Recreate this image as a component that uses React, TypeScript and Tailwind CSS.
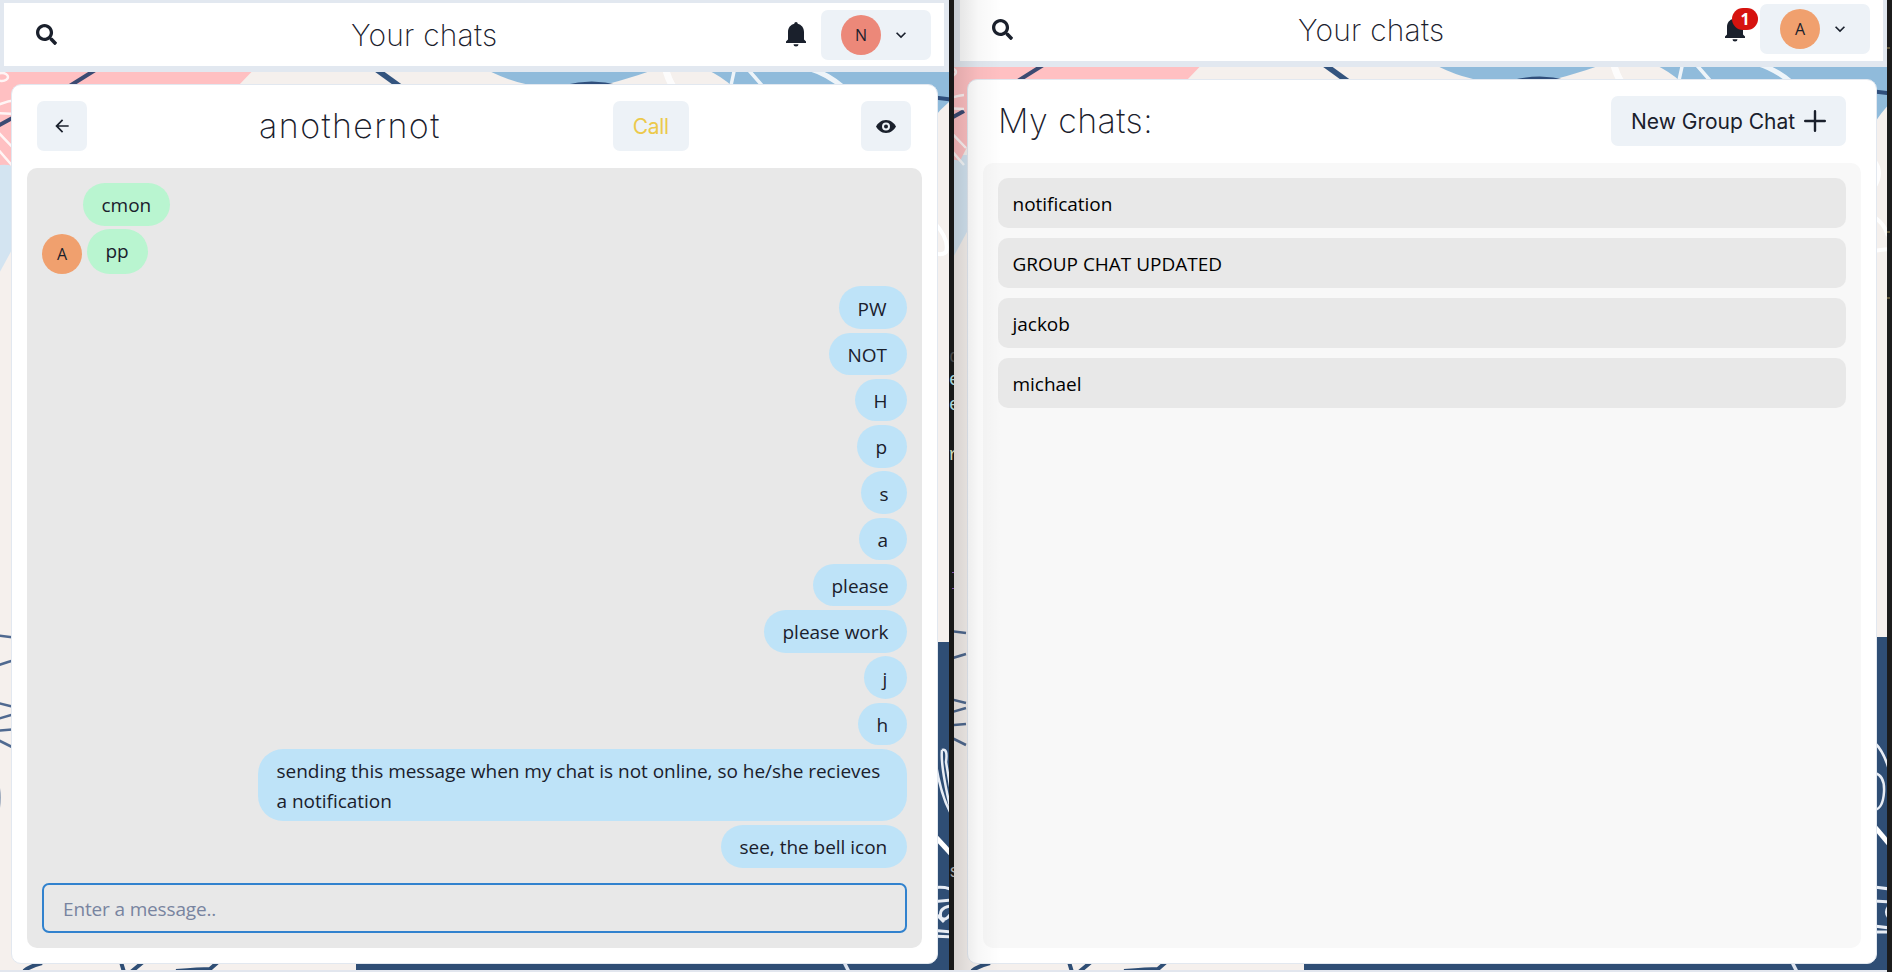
import type { ReactNode } from "react";
import { FaSearch } from "react-icons/fa";

function BellIcon() {
  return (
    <svg className="h-[25px] w-5 shrink-0" viewBox="0 0 20 25" fill="#1a202c">
      <path d="M10 0a1.7 1.7 0 0 1 1.7 1.8C15.4 2.7 18 5.8 18 10v7.6l2 1.9V21H0v-1.5l2-1.9V10c0-4.2 2.6-7.3 6.300-8.200A1.7 1.7 0 0 1 10 0z" />
      <path d="M7.500 22.200h5a2.500 2.300 0 0 1-5 0z" />
    </svg>
  );
}

function ChevronIcon() {
  return (
    <svg className="size-5 shrink-0" viewBox="0 0 24 24" fill="#1a202c">
      <path d="M16.590 8.590L12 13.170 7.410 8.590 6 10l6 6 6-6z" />
    </svg>
  );
}

function BackIcon() {
  return (
    <svg className="size-5" viewBox="0 0 24 24" fill="#1a202c">
      <path d="M20 11H7.830l5.590-5.590L12 4l-8 8 8 8 1.410-1.410L7.830 13H20v-2z" />
    </svg>
  );
}

function EyeIcon() {
  return (
    <svg className="h-[13px] w-5" viewBox="0 0 20 13">
      <path d="M10 0C5 0 1.500 3.600 0 6.500 1.500 9.400 5 13 10 13s8.500-3.600 10-6.500C18.500 3.600 15 0 10 0z" fill="#1a202c" />
      <circle cx="10" cy="6.500" r="3" fill="#1a202c" stroke="#edf2f7" strokeWidth="2" />
    </svg>
  );
}

function PlusIcon() {
  return (
    <svg className="size-[22px]" viewBox="0 0 22 22" stroke="#1a202c" strokeWidth="2.400" strokeLinecap="round">
      <path d="M11 1.200v19.600M1.200 11h19.600" />
    </svg>
  );
}

function Pattern({ dx, dy, edge }: { dx: number; dy: number; edge: ReactNode }) {
  return (
    <svg className="absolute inset-0 size-full" fill="none">
      <g transform={`translate(${dx} ${dy})`}>
        <path d="M-10 160H20V235L-10 290z" fill="#d3e4f1" />
        <path d="M-10 60H263L215 110H40L12 166Q4 163-10 167z" fill="#ffc0c2" />
        <path d="M470 60Q508 84 540 86H600Q640 76 680 60z" fill="#90bbdb" />
        <path d="M680 60Q718 70 738 92H920V140Q932 116 949 102L960 96V60z" fill="#90bbdb" />
        <path d="M915 642H960V980H915z" fill="#2f4e75" />
        <g stroke="#3b4a72" strokeWidth="4">
          <path d="M68 87L100 67M-6 128L16 116" />
          <path d="M373 67L402 88" stroke="#33547f" strokeWidth="5.500" />
          <path d="M565 87Q592 80 618 87M922 96L955 100" stroke="#2f4e7b" />
        </g>
        <g stroke="#fff" strokeWidth="2.500" opacity=".85">
          <ellipse cx="2" cy="77" rx="6" ry="4" />
          <path d="M-4 106Q6 101 16 100M-4 113L16 114M-4 130L18 153M-4 147L16 170" />
          <path d="M665 66Q668 80 674 88" strokeWidth="7" />
          <path d="M735 67L730 90M746 67L766 90" strokeWidth="3.500" />
          <path d="M808 68Q828 74 844 88" strokeWidth="5" />
        </g>
        <path
          d="M-6 635L18 638M-6 667Q4 663 18 659M-6 702L18 708M-6 720L18 713M-6 731L18 729M-6 738L18 750"
          stroke="#4f6990"
          strokeWidth="2.600"
        />
        <path d="M-1 788Q1 797-1 808" stroke="#9daabd" strokeWidth="2" />
      </g>
      {edge}
      <g transform={`translate(${dx} 0)`}>
        <path d="M356 955H960V970H356z" fill="#2f4e75" />
        <g stroke="#2f4e75" strokeWidth="4">
          <path d="M24 971Q30 966 42 963M121 962L124 972M131 972L143 962" />
          <path d="M176 971Q200 969 210 969L218 962" />
        </g>
        <path d="M844 962L849 972" stroke="#dde3ee" strokeWidth="3.500" />
      </g>
    </svg>
  );
}

function ChatEdge() {
  return (
    <g stroke="#e8edf5" strokeWidth="2.500">
      <path d="M934 222Q950 240 946 252Q942 256 934 253" stroke="#fff" strokeWidth="4" />
      <path d="M942 750Q940 765 952 815M942 750Q948 748 946 762L951 792M936 765Q941 795 950 812" />
      <path d="M932 833L955 858" stroke="#fff" strokeWidth="5" />
      <path d="M930 888Q944 886 950 889M930 902L952 900M950 906Q938 908 941 918Q946 922 952 912M930 908L944 922M930 930L952 932M930 936L952 937" strokeWidth="3" />
    </g>
  );
}

function ListEdge() {
  return (
    <g stroke="#e8edf5" strokeWidth="2.500">
      <path d="M920 160Q930 172 920 188M918 216Q930 222 934 236M918 251L936 249" stroke="#fff" strokeWidth="4" opacity=".85" />
      <path d="M921 743Q930 752 935 770M921 773Q931 776 930 792Q929 808 921 810" />
      <path d="M920 826L936 845" stroke="#fff" strokeWidth="5" />
      <path d="M920 887L936 889M920 901L936 902M935 906Q930 912 935 918M920 926L936 928M920 932L936 932" strokeWidth="3" />
    </g>
  );
}

function Avatar({ letter, color }: { letter: string; color: string }) {
  return (
    <div className={`flex size-10 shrink-0 items-center justify-center rounded-full font-['Open_Sans',sans-serif] text-[16px] font-medium leading-none text-[#1a202c] ${color}`}>
      {letter}
    </div>
  );
}

function Header({ letter, color, badge, className, titleClass }: { letter: string; color: string; badge?: number; className: string; titleClass: string }) {
  return (
    <header className={`relative flex shrink-0 items-center border-[#e2e8f0] bg-white ${className}`}>
      <FaSearch className="size-[21px] shrink-0 text-[#1a202c]" />
      <h1 className={`whitespace-nowrap text-[30px] font-extralight leading-[30px] tracking-[0.200px] text-[#1a202c] ${titleClass}`}>Your chats</h1>
      <div className="ml-auto flex items-center">
        <div className="relative mr-[15px]">
          <BellIcon />
          {badge !== undefined && (
            <span className="absolute -top-[9px] left-[7px] flex h-[22px] w-[26px] items-center justify-center rounded-full bg-[#d6130f] font-['Open_Sans',sans-serif] text-[16px] font-bold leading-none text-white">
              {badge}
            </span>
          )}
        </div>
        <button className="flex h-[50px] w-[110px] items-center rounded-[7px] bg-[#edf2f7] pl-5">
          <Avatar letter={letter} color={color} />
          <span className="ml-[10px]">
            <ChevronIcon />
          </span>
        </button>
      </div>
    </header>
  );
}

function Bubble({ children, className }: { children: ReactNode; className: string }) {
  return (
    <div className={`flex shrink-0 items-center rounded-[25px] pl-[18.500px] font-['Open_Sans',sans-serif] text-[19px] leading-[30px] tracking-[-0.020px] text-[#1a202c] ${className}`}>
      <span>{children}</span>
    </div>
  );
}

const sent = [
  { text: "PW", width: "w-[68px]" },
  { text: "NOT", width: "w-[78px]" },
  { text: "H", width: "w-[52px]" },
  { text: "p", width: "w-[50px]" },
  { text: "s", width: "w-[46px]" },
  { text: "a", width: "w-[48px]" },
  { text: "please", width: "w-[94px]" },
  { text: "please work", width: "w-[143px]" },
  { text: "j", width: "w-[43px]" },
  { text: "h", width: "w-[49px]" },
];

const chats = ["notification", "GROUP CHAT UPDATED", "jackob", "michael"];

function ChatWindow() {
  return (
    <section className="relative flex h-[970px] w-[949px] shrink-0 flex-col overflow-hidden bg-[#f5f0ed]">
      <Pattern dx={0} dy={0} edge={<ChatEdge />} />
      <Header letter="N" color="bg-[#ec8879]" titleClass="ml-[294px]" className="h-[72px] border-b-[6px] border-l-4 border-r-[5px] border-t-[3px] pl-8 pr-[13px]" />
      <div className="relative ml-[11px] mt-3 flex h-[880px] w-[927px] flex-col rounded-[10px] border border-[#e2e8f0] bg-white px-[15px] pb-[15px] pt-4">
        <div className="flex h-[50px] items-center justify-between pl-[10px] pr-[11px]">
          <button className="flex size-[50px] items-center justify-center rounded-[7px] bg-[#edf2f7]">
            <BackIcon />
          </button>
          <h2 className="text-[34px] font-extralight leading-10 tracking-[1.400px] text-[#1a202c]">anothernot</h2>
          <button className="flex h-[50px] w-[76px] items-center justify-center rounded-[7px] bg-[#edf2f7] pt-[2px] text-[21px] tracking-[-0.300px] text-[#ecc94b]">Call</button>
          <button className="flex size-[50px] items-center justify-center rounded-[7px] bg-[#edf2f7]">
            <EyeIcon />
          </button>
        </div>
        <div className="mt-[17px] flex flex-1 flex-col rounded-[10px] bg-[#e8e8e8] p-[15px]">
          <Bubble className="ml-[41px] h-[42.500px] w-[87px] bg-[#b9f5d0] pt-[2px]">cmon</Bubble>
          <div className="mt-[3.750px] flex items-end">
            <Avatar letter="A" color="bg-[#f0a06e]" />
            <Bubble className="ml-[5px] h-[45px] w-[61px] bg-[#b9f5d0] pb-[2px]">pp</Bubble>
          </div>
          <div className="mt-[12px] flex flex-col items-end gap-[3.750px]">
            {sent.map((m) => (
              <Bubble key={m.text} className={`h-[42.500px] bg-[#bee3f8] pt-[2px] ${m.width}`}>{m.text}</Bubble>
            ))}
            <Bubble className="h-[72.500px] w-[649px] bg-[#bee3f8] pt-px">
              sending this message when my chat is not online, so he/she recieves
              <br />a notification
            </Bubble>
            <Bubble className="h-[42.500px] w-[186px] bg-[#bee3f8] pt-[2px]">see, the bell icon</Bubble>
          </div>
          <input
            placeholder="Enter a message.."
            className="mt-auto h-[50px] w-full rounded-[7px] border-2 border-[#3182ce] bg-transparent px-[19px] pt-[2px] font-['Open_Sans',sans-serif] text-[19px] tracking-[-0.150px] outline-none placeholder:text-[#7884a0]"
          />
        </div>
      </div>
    </section>
  );
}

function ListWindow() {
  return (
    <section className="relative flex h-[970px] w-[933px] shrink-0 flex-col overflow-hidden bg-[#f5f0ed]">
      <Pattern dx={-6} dy={-5} edge={<ListEdge />} />
      <Header letter="A" color="bg-[#f0a06e]" badge={1} titleClass="ml-[285px] pt-[2px]" className="h-[67px] border-b-[6px] border-l-[6px] border-r-4 pb-[3px] pl-8 pr-[13px]" />
      <div className="relative ml-[13px] mt-3 flex h-[885px] w-[910px] flex-col rounded-[10px] border border-[#e2e8f0] bg-white px-[15px] pb-[15px] pt-4">
        <div className="flex h-[50px] items-center justify-between px-[15px]">
          <h2 className="text-[34px] font-extralight leading-10 tracking-[0.450px] text-[#1a202c]">My chats:</h2>
          <button className="flex h-[50px] w-[235px] items-center justify-between rounded-[7px] bg-[#edf2f7] px-5 text-[21px] text-[#1a202c]">
            <span className="pt-[2px]">New Group Chat</span>
            <PlusIcon />
          </button>
        </div>
        <div className="mt-[17px] flex flex-1 flex-col gap-[10px] rounded-[10px] bg-[#f8f8f8] p-[15px]">
          {chats.map((name) => (
            <div key={name} className="flex h-[50px] items-center rounded-[10px] bg-[#e8e8e8] px-[14.500px] pt-px font-['Open_Sans',sans-serif] text-[19px] leading-[30px] tracking-[-0.020px] text-black">
              {name}
            </div>
          ))}
        </div>
      </div>
      <div className="pointer-events-none absolute inset-y-0 left-0 w-12 bg-linear-to-r from-black/12 via-black/3 to-transparent" />
    </section>
  );
}

export default function App() {
  return (
    <main className="flex h-[972px] w-[1892px] flex-col overflow-hidden bg-[#e2e6ee] font-['Inter',sans-serif]">
      <div className="flex">
        <ChatWindow />
        <div className="relative h-[970px] w-[5px] shrink-0 overflow-hidden bg-[#181818] font-['Liberation_Mono',monospace] text-[18px] leading-5">
          <span className="absolute left-0 top-[347px] text-[#444]">d</span>
          <span className="absolute left-0 top-[370px] text-[#a8d4d8]">e</span>
          <span className="absolute left-0 top-[395px] text-[#a8d4d8]">e</span>
          <span className="absolute -left-px top-[445px] text-[#c8d8b8]">r</span>
          <span className="absolute left-0 top-[862px] text-[#aaa]">s</span>
          <span className="absolute left-[3px] top-[572px] h-px w-[2px] bg-[#7a4fa8]" />
          <span className="absolute left-[3px] top-[588px] h-px w-[2px] bg-[#7a4fa8]" />
        </div>
        <ListWindow />
        <div className="relative h-[972px] w-[5px] shrink-0 bg-[#1c1c1c]">
          <span className="absolute left-0 top-[47px] h-[2px] w-[3px] bg-[#5c5238]" />
          <span className="absolute left-0 top-[231px] h-[2px] w-[3px] bg-[#5c5238]" />
          <span className="absolute left-0 top-[297px] h-[2px] w-[3px] bg-[#5c5238]" />
        </div>
      </div>
    </main>
  );
}
